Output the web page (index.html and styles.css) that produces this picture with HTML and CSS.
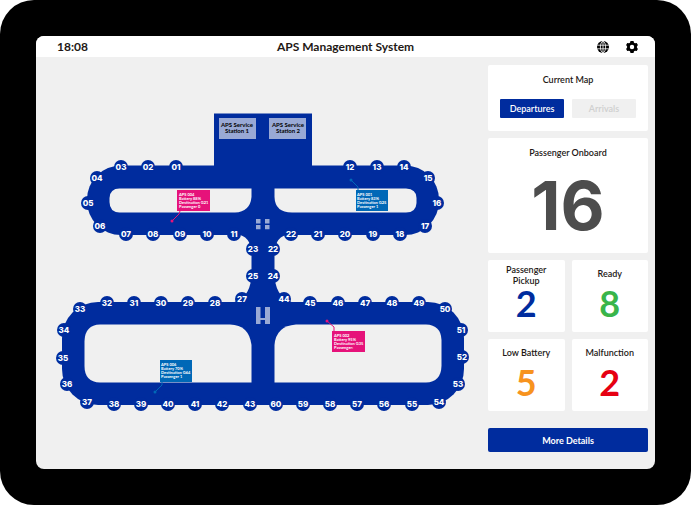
FILE: index.html
```html
<!DOCTYPE html>
<html lang="en">
<head>
<meta charset="utf-8">
<meta name="viewport" content="width=device-width, initial-scale=1">
<title>APS Management System</title>
<link rel="stylesheet" href="styles.css">
</head>
<body>
<div class="tablet">
  <div class="screen">
    <header class="topbar">
      <time class="clock">18:08</time>
      <h1 class="title">APS Management System</h1>
      <div class="tools">
        <button class="icon-button" type="button" aria-label="Language">
          <svg viewBox="0 0 12 12" aria-hidden="true">
            <circle cx="6" cy="6" r="6"/>
            <g fill="none" stroke="#fff" stroke-width=".8">
              <ellipse cx="6" cy="6" rx="2.6" ry="5.6"/>
              <path d="M6 0v12M.2 4.2h11.6M.2 7.8h11.6"/>
            </g>
          </svg>
        </button>
        <button class="icon-button" type="button" aria-label="Settings">
          <svg viewBox="0 0 12 12" aria-hidden="true">
            <path fill-rule="evenodd" d="M4.5 0h3l.5 1.7 1 .6 1.7-.4 1.2 2.2-1 1.3v1.2l1 1.3-1.2 2.2-1.7-.4-1 .6-.5 1.7h-3L4 10.3l-1-.6-1.7.4L.1 7.9l1-1.3V5.4l-1-1.3 1.2-2.2 1.700.4 1-.6zM6 3.8a2.2 2.2 0 1 0 0 4.4 2.2 2.2 0 0 0 0-4.4z"/>
          </svg>
        </button>
      </div>
    </header>
    <main class="content">
      <svg class="map" viewBox="36 57 452 412" role="img" aria-label="Terminal gate map">
        <g class="route">
          <path d="M214 113.500h98v60h-98z"/>
          <rect x="87" y="165.500" width="352" height="69.500" rx="34"/>
          <rect x="62" y="302" width="402" height="103" rx="36"/>
          <path d="M236 234Q251 236 251.500 253V277Q249 302 228 303H298Q277 302 274.500 277V253Q275 236 290 234z"/>
        </g>
        <g class="gap">
          <path d="M119.500 188.500H251.500V197Q250 212 235 212.500H119.500Q109.500 212 109.500 202V198Q110 188.500 119.500 188.500z"/>
          <path d="M274.500 188.500H406Q416.500 189 416.500 198V203Q416 212.500 406 212.500H292Q275 212.500 274.500 197z"/>
          <path d="M100 324.500H230Q249 325 251.500 345V382.500H100Q84.500 382 84.500 366V341Q85 325 100 324.500z"/>
          <path d="M296 324.500H426Q441 325 441.500 340V366Q441 382 426 382.500H274.500V345Q276 326 296 324.500z"/>
        </g>
        <g class="marks">
          <path d="M256 219h4.500v4.500H256zM265 219h4.500v4.500H265zM256 225h4.500v4.300H256zM265 225h4.500v4.300H265z"/>
          <path d="M256 307h4.500v11h4.500v-11h5v17h-5v-4h-4.500v4H256z"/>
        </g>
        <g class="stations">
          <rect x="219" y="118" width="37" height="21"/>
          <rect x="269" y="118" width="37" height="21"/>
          <text x="237" y="127">APS Service</text><text x="237" y="133">Station 1</text>
          <text x="288" y="127">APS Service</text><text x="288" y="133">Station 2</text>
        </g>
        <g class="gates" id="gates"></g>
        <g class="tag tag-busy">
          <path class="lead" d="M172 221l7-7 1-3"/><circle cx="172" cy="221" r="1.500"/>
          <rect x="177" y="190" width="33" height="21"/>
          <text x="179" y="196">APS 004</text><text x="179" y="200">Battery 88%</text><text x="179" y="204">Destination G21</text><text x="179" y="208">Passenger 0</text>
        </g>
        <g class="tag">
          <path class="lead" d="M351 180l7 7v3"/><circle cx="351" cy="180" r="1.500"/>
          <rect x="356" y="190" width="32" height="21"/>
          <text x="357" y="196">APS 001</text><text x="357" y="200">Battery 83%</text><text x="357" y="204">Destination G25</text><text x="357" y="208">Passenger 1</text>
        </g>
        <g class="tag tag-busy">
          <path class="lead" d="M327 321l7 6v4"/><circle cx="327" cy="321" r="1.500"/>
          <rect x="332" y="331" width="33" height="21"/>
          <text x="334" y="337">APS 002</text><text x="334" y="341">Battery 95%</text><text x="334" y="345">Destination G35</text><text x="334" y="349">Passenger:</text>
        </g>
        <g class="tag">
          <path class="lead" d="M155 392l7-7v-4"/><circle cx="155" cy="392" r="1.500"/>
          <rect x="160" y="360" width="32" height="22"/>
          <text x="161" y="366">APS 006</text><text x="161" y="370">Battery 70%</text><text x="161" y="374">Destination G64</text><text x="161" y="378">Passenger 1</text>
        </g>
      </svg>
      <aside class="sidebar">
        <section class="card card-map">
          <h2>Current Map</h2>
          <div class="switch">
            <button class="choice choice-on" type="button" aria-pressed="true">Departures</button>
            <button class="choice" type="button" aria-pressed="false">Arrivals</button>
          </div>
        </section>
        <section class="card card-total">
          <h2>Passenger Onboard</h2>
          <p class="total">16</p>
        </section>
        <div class="stats">
          <section class="card stat stat-pickup"><h2>Passenger<br>Pickup</h2><p>2</p></section>
          <section class="card stat stat-ready"><h2>Ready</h2><p>8</p></section>
          <section class="card stat stat-battery"><h2>Low Battery</h2><p>5</p></section>
          <section class="card stat stat-fault"><h2>Malfunction</h2><p>2</p></section>
        </div>
        <button class="more" type="button">More Details</button>
      </aside>
    </main>
  </div>
</div>
<script src="gates.js"></script>
</body>
</html>
```
FILE: styles.css
```css
* { box-sizing: border-box; }

body {
  margin: 0;
  background: #fff;
  color: #231815;
  font-family: Lato, "Open Sans", sans-serif;
}

h1, h2, p { margin: 0; }

button {
  border: 0;
  padding: 0;
  font: inherit;
  cursor: pointer;
}

.tablet {
  display: flex;
  min-height: 100vh;
  padding: 36px;
  border-radius: 34px;
  background: #000;
}

.screen {
  display: flex;
  flex: 1;
  flex-direction: column;
  overflow: hidden;
  border-radius: 8px;
  background: #f0f0f0;
}

.topbar {
  display: grid;
  grid-template-columns: 1fr auto 1fr;
  align-items: center;
  height: 21px;
  padding: 0 17px;
  background: #fff;
}

.clock, .title {
  font-size: 12px;
  font-weight: 700;
  line-height: 21px;
}

.clock { padding-left: 4px; }

.tools {
  display: flex;
  justify-content: flex-end;
  gap: 17px;
}

.icon-button {
  width: 12px;
  height: 12px;
  background: none;
}

.icon-button svg { display: block; }

.content {
  display: grid;
  flex: 1;
  grid-template-columns: 1fr 160px;
  padding-right: 7px;
}

.map {
  display: block;
  width: 100%;
  height: 100%;
}

.route { fill: #002c9e; }
.gap { fill: #f0f0f0; }
.marks, .stations rect { fill: #99a9d5; }

.stations text {
  fill: #000;
  font-size: 6px;
  font-weight: 700;
  text-anchor: middle;
}

.gates circle { fill: #002c9e; }

.gates text {
  fill: #fff;
  font-family: Inter, sans-serif;
  font-size: 8px;
  font-weight: 800;
  text-anchor: middle;
}

.tag { fill: #0068b7; }
.tag-busy { fill: #e6127a; }

.lead {
  fill: none;
  stroke: #0068b7;
}

.tag-busy .lead { stroke: #e6127a; }

.tag text {
  fill: #fff;
  font-size: 4px;
  font-weight: 700;
}

.sidebar {
  display: flex;
  flex-direction: column;
  gap: 7px;
  padding: 8px 0 17px;
}

.card {
  border-radius: 2px;
  background: #fff;
  text-align: center;
}

.card h2 {
  font-size: 9px;
  font-weight: 600;
  line-height: 11px;
}

.card-map {
  min-height: 66px;
  padding: 9px 12px;
}

.switch {
  display: grid;
  grid-template-columns: 1fr 1fr;
  gap: 8px;
  margin-top: 14px;
}

.choice {
  height: 19px;
  border-radius: 1px;
  background: #f0f0f0;
  color: #cfcfcf;
  font-size: 9px;
  font-weight: 600;
}

.choice-on {
  background: #002c9e;
  color: #fff;
}

.card-total {
  min-height: 115px;
  padding-top: 9px;
}

.total {
  color: #4d4d4d;
  font-family: Inter, sans-serif;
  font-size: 68px;
  font-weight: 700;
  line-height: 95px;
}

.stats {
  display: grid;
  grid-template-columns: 1fr 1fr;
  gap: 7px;
}

.stat {
  display: flex;
  flex-direction: column;
  min-height: 72px;
}

.stat h2 {
  display: grid;
  place-items: center;
  height: 26px;
}

.stat p {
  font-size: 36px;
  font-weight: 700;
  line-height: 35px;
}

.stat-pickup h2 {
  display: block;
  padding-top: 4px;
}

.stat-pickup p { color: #002c9e; }
.stat-ready p { color: #39b54a; }
.stat-battery p { color: #f7931e; }
.stat-fault p { color: #e60012; }

.more {
  height: 24px;
  margin-top: 10px;
  border-radius: 2px;
  background: #002c9e;
  color: #fff;
  font-size: 9px;
  font-weight: 700;
}
```
FILE: gates.js
```js
// Gate label and centre point on the map canvas.
const gates = [
  ["03", 121, 167], ["02", 148, 167], ["01", 176, 167], ["04", 97, 178],
  ["05", 88, 203], ["06", 100, 226], ["07", 126, 234], ["08", 153, 234],
  ["09", 180, 234], ["10", 207, 234], ["11", 234, 234],
  ["12", 350, 167], ["13", 377, 167], ["14", 404, 167], ["15", 428, 178],
  ["16", 437, 203], ["17", 425, 226], ["18", 400, 234], ["19", 373, 234],
  ["20", 345, 234], ["21", 318, 234], ["22", 291, 234],
  ["23", 253, 249], ["22", 273, 249], ["25", 253, 276], ["24", 273, 276],
  ["27", 242, 299], ["44", 284, 299],
  ["28", 215, 303], ["29", 188, 303], ["30", 161, 303], ["31", 134, 303],
  ["32", 107, 303], ["33", 80, 309], ["34", 64, 330], ["35", 63, 358],
  ["36", 67, 384], ["37", 87, 402], ["38", 114, 404], ["39", 141, 404],
  ["40", 168, 404], ["41", 195, 404], ["42", 222, 404], ["43", 250, 404],
  ["60", 276, 404], ["59", 303, 404], ["58", 330, 404], ["57", 357, 404],
  ["56", 384, 404], ["55", 412, 404], ["54", 439, 402], ["53", 458, 384],
  ["52", 462, 357], ["51", 461, 330], ["50", 445, 309], ["49", 419, 303],
  ["48", 392, 303], ["47", 365, 303], ["46", 338, 303], ["45", 310, 303]
];

const svgNamespace = "http://www.w3.org/2000/svg";
const layer = document.getElementById("gates");

for (const [label, x, y] of gates) {
  const circle = document.createElementNS(svgNamespace, "circle");
  circle.setAttribute("cx", x);
  circle.setAttribute("cy", y);
  circle.setAttribute("r", 7);
  const text = document.createElementNS(svgNamespace, "text");
  text.setAttribute("x", x);
  text.setAttribute("y", y + 3);
  text.textContent = label;
  layer.append(circle, text);
}
```
